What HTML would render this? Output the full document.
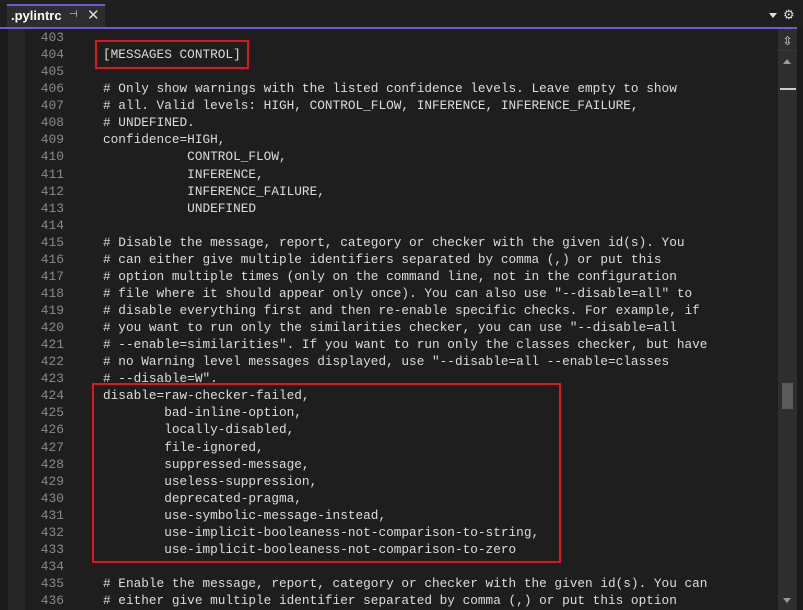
<!DOCTYPE html>
<html><head><meta charset="utf-8"><style>
body{margin:0;width:803px;height:610px;background:#1e1e1e;overflow:hidden;position:relative;font-family:"Liberation Sans",sans-serif}
.top{position:absolute;left:0;top:0;width:803px;height:27px;background:#1f1f1f}
.tab{position:absolute;left:7px;top:4px;width:98px;height:23px;background:#2d2d30;border-top:2px solid #6b5bd6;box-sizing:border-box;color:#fff;font-size:13px;font-weight:bold}
.line{position:absolute;left:0;top:27px;width:797px;height:2px;background:#6b5bd6}
.g1{position:absolute;left:0;top:29px;width:8px;height:581px;background:#1a1a1a}
.g2{position:absolute;left:8px;top:29px;width:17px;height:581px;background:#262626}
pre{margin:0;position:absolute;top:29px;font-family:"Liberation Mono",monospace;font-size:12.75px;line-height:17.06px}
.nums{left:25px;width:39px;text-align:right;color:#8a8a8a;font-size:12.93px}
.code{left:103px;color:#dcdcdc}
.box{position:absolute;border:2px solid #e0161f;box-sizing:border-box}
.sb{position:absolute;left:778px;top:29px;width:19px;height:581px;background:#2e2e2e}
.rs{position:absolute;left:797px;top:29px;width:6px;height:581px;background:#1b1b1b}
</style></head><body>
<div class="top"></div>
<div class="tab"><span style="position:absolute;left:4px;top:2px">.pylintrc</span><span style="position:absolute;left:62px;top:3px;font-size:10px;color:#ccc;font-weight:normal">⊣</span><span style="position:absolute;left:80px;top:0px;font-size:15px;color:#ddd;font-weight:normal">✕</span></div>
<div style="position:absolute;left:769px;top:13px;width:0;height:0;border-left:4px solid transparent;border-right:4px solid transparent;border-top:5px solid #ddd"></div>
<div style="position:absolute;left:783px;top:7px;color:#ddd;font-size:13px">⚙</div>
<div class="line"></div>
<div class="g1"></div><div class="g2"></div>
<div class="sb">
<div style="position:absolute;left:4px;top:5px;width:11px;height:14px;color:#ddd;font-size:12px;line-height:14px;text-align:center">⇳</div>
<div style="position:absolute;left:0;top:21px;width:19px;height:1px;background:#3a3a3a"></div>
<div style="position:absolute;left:5px;top:30px;width:0;height:0;border-left:4px solid transparent;border-right:4px solid transparent;border-bottom:5px solid #999"></div>
<div style="position:absolute;left:2px;top:59px;width:16px;height:2px;background:#ccc"></div>
<div style="position:absolute;left:4px;top:354px;width:11px;height:26px;background:#5a5a5a"></div>
<div style="position:absolute;left:5px;top:569px;width:0;height:0;border-left:4px solid transparent;border-right:4px solid transparent;border-top:5px solid #999"></div>
</div>
<div class="rs"></div>
<pre class="nums">403
404
405
406
407
408
409
410
411
412
413
414
415
416
417
418
419
420
421
422
423
424
425
426
427
428
429
430
431
432
433
434
435
436</pre>
<pre class="code">

[MESSAGES CONTROL]

# Only show warnings with the listed confidence levels. Leave empty to show
# all. Valid levels: HIGH, CONTROL_FLOW, INFERENCE, INFERENCE_FAILURE,
# UNDEFINED.
confidence=HIGH,
           CONTROL_FLOW,
           INFERENCE,
           INFERENCE_FAILURE,
           UNDEFINED

# Disable the message, report, category or checker with the given id(s). You
# can either give multiple identifiers separated by comma (,) or put this
# option multiple times (only on the command line, not in the configuration
# file where it should appear only once). You can also use "--disable=all" to
# disable everything first and then re-enable specific checks. For example, if
# you want to run only the similarities checker, you can use "--disable=all
# --enable=similarities". If you want to run only the classes checker, but have
# no Warning level messages displayed, use "--disable=all --enable=classes
# --disable=W".
disable=raw-checker-failed,
        bad-inline-option,
        locally-disabled,
        file-ignored,
        suppressed-message,
        useless-suppression,
        deprecated-pragma,
        use-symbolic-message-instead,
        use-implicit-booleaness-not-comparison-to-string,
        use-implicit-booleaness-not-comparison-to-zero

# Enable the message, report, category or checker with the given id(s). You can
# either give multiple identifier separated by comma (,) or put this option</pre>
<div class="box" style="left:95px;top:40px;width:154px;height:29px"></div>
<div class="box" style="left:92px;top:383px;width:469px;height:180px"></div>
</body></html>
